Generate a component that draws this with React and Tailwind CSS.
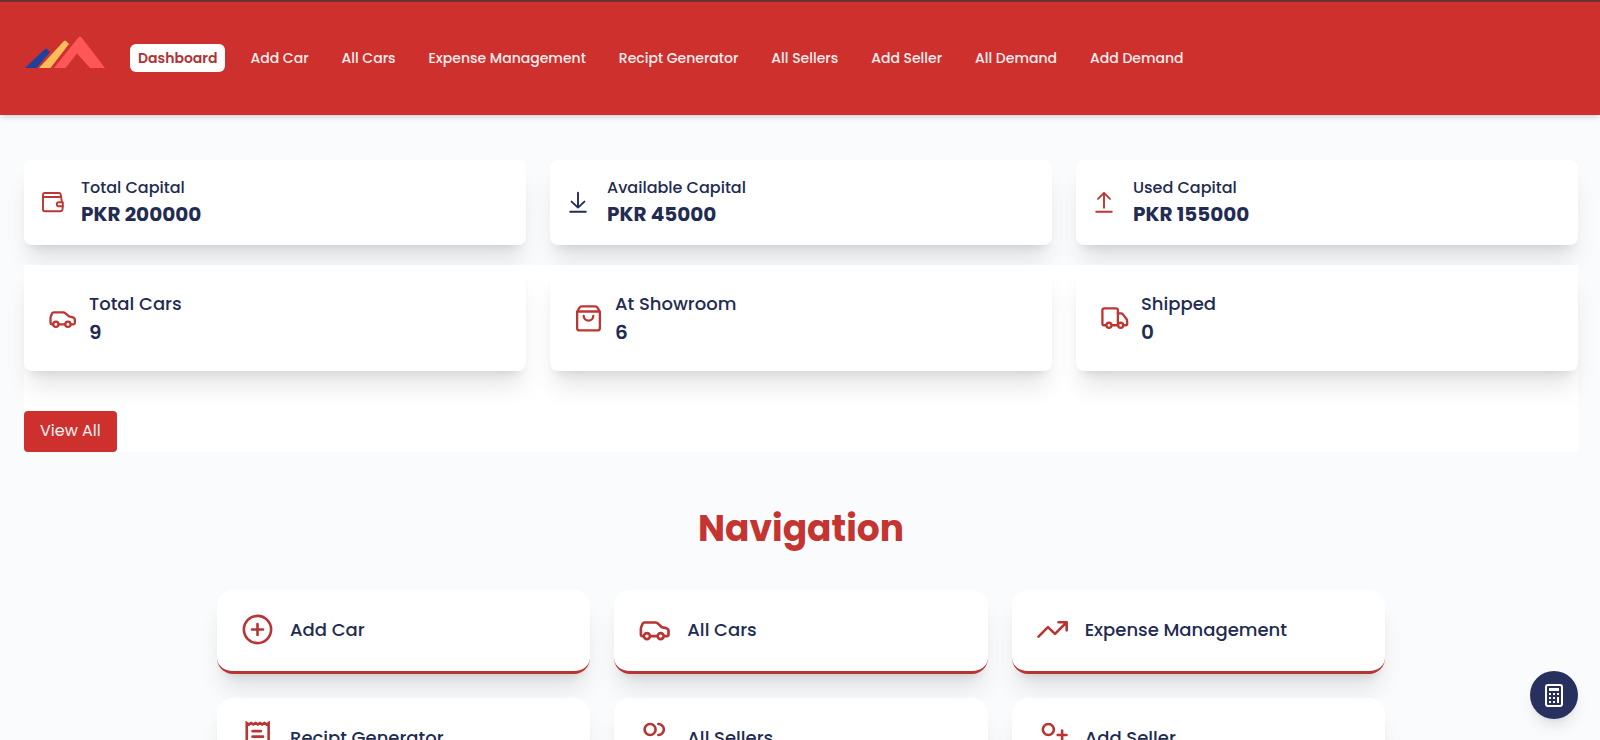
import React from "react";

const navLinks = [
  "Dashboard",
  "Add Car",
  "All Cars",
  "Expense Management",
  "Recipt Generator",
  "All Sellers",
  "Add Seller",
  "All Demand",
  "Add Demand",
];

function Icon({ children, className = "" }) {
  return (
    <svg
      viewBox="0 0 24 24"
      fill="none"
      stroke="currentColor"
      strokeWidth={1.9}
      strokeLinecap="round"
      strokeLinejoin="round"
      aria-hidden="true"
      className={`shrink-0 ${className}`}
    >
      {children}
    </svg>
  );
}

const walletPaths = (
  <>
    <path d="M21.8 12.2 21.2 7 20.6 4.2Q20.3 3 19.2 3H4.8Q3 3 3 4.8V19.6Q3 21.2 4.6 21.2H20.6Q22.2 21.2 22.5 19.5L22.8 16.2" />
    <path d="M3 7h18.2M22.8 12.2h-4a2 2 0 0 0 0 4h4z" />
  </>
);
const downPaths = <path d="M12 2.8v14.7M5.6 11.6l6.4 6 6.4-6M4.2 21.7h15.6" />;
const upPaths = <path d="M12 17.8V2.9M6 8.8l6-6 6 6M4.2 21.7h15.6" />;
const carPaths = (
  <>
    <path d="M4.2 16.8H3.2A1.1 1.1 0 0 1 2.1 15.7V11.6Q2.1 11 2.3 10.4L3.3 7.9Q3.7 6.9 4.8 6.9H12.6Q13.5 6.9 14.2 7.5L17.4 10.3 20.6 11Q22.2 11.5 22.2 13.2V15.7A1.1 1.1 0 0 1 21.1 16.8H18.9M8.8 16.8h5.4" />
    <circle cx="6.5" cy="16.8" r="2.2" />
    <circle cx="16.5" cy="16.8" r="2.2" />
  </>
);
const bagPaths = (
  <>
    <path d="M2.6 6.2V20Q2.6 21.9 4.5 21.9H19.5Q21.4 21.9 21.4 20V6.2L19.4 3Q18.8 2 17.6 2H6.4Q5.2 2 4.6 3zM2.6 6.2H21.4" />
    <path d="M8 9.8a4 4 0 0 0 8 0" />
  </>
);
const truckPaths = (
  <>
    <path d="M5.1 17.6H3.2Q2 17.6 2 16.4V5.2Q2 3.6 3.6 3.6H13.2Q14.8 3.6 14.8 5.2V17.6H9.7" />
    <path d="M14.8 7.8H17.4Q18.4 7.8 19 8.6L21.8 12.2Q22.5 13.1 22.5 14.2V16.4Q22.5 17.6 21.3 17.6H19.4" />
    <circle cx="7.4" cy="17.6" r="2.1" />
    <circle cx="17.1" cy="17.6" r="2.1" />
  </>
);
const plusCirclePaths = (
  <>
    <circle cx="12" cy="12" r="9.9" />
    <path d="M12 8v8M8 12h8" />
  </>
);
const trendPaths = <path d="M1.8 17.2 8.7 10.3 13.8 15.2 22.3 6.7M16.4 6.7h5.9v5.9" />;
const receiptPaths = (
  <>
    <path
      strokeLinejoin="miter"
      d="M4.2 1.5v21l1.6-1 1.6 1 1.6-1 1.6 1 1.6-1 1.6 1 1.6-1 1.6 1 1.600-1 1.500 1V1.500l-1.500 1-1.600-1-1.600 1-1.600-1-1.600 1-1.600-1-1.600 1-1.600-1-1.600 1z"
    />
    <path d="M8.400 7.400h6M8.400 11.400h7.600M8.400 15.400h7.600" />
  </>
);
const sellersPaths = (
  <>
    <circle cx="8.8" cy="6.2" r="4" />
    <path d="M14.8 2.2a4 4 0 0 1 0 8M1.8 21v-2a4 4 0 0 1 4-4h6a4 4 0 0 1 4 4v2M18.5 15.3a4 4 0 0 1 3 3.7v2" />
  </>
);
const addSellerPaths = (
  <>
    <circle cx="9" cy="6.2" r="4" />
    <path d="M19 7v6.4M15.8 10.2h6.4M2 21v-2a4 4 0 0 1 4-4h6a4 4 0 0 1 4 4v2" />
  </>
);

const capital = [
  { label: "Total Capital", value: "PKR 200000", icon: walletPaths, color: "text-[#bd3632]" },
  { label: "Available Capital", value: "PKR 45000", icon: downPaths, color: "text-[#232d59]" },
  { label: "Used Capital", value: "PKR 155000", icon: upPaths, color: "text-[#bd3632]" },
];

const cars = [
  { label: "Total Cars", value: "9", icon: carPaths },
  { label: "At Showroom", value: "6", icon: bagPaths },
  { label: "Shipped", value: "0", icon: truckPaths },
];

const shortcuts = [
  { label: "Add Car", icon: plusCirclePaths },
  { label: "All Cars", icon: carPaths },
  { label: "Expense Management", icon: trendPaths },
  { label: "Recipt Generator", icon: receiptPaths },
  { label: "All Sellers", icon: sellersPaths },
  { label: "Add Seller", icon: addSellerPaths },
];

function Logo() {
  return (
    <svg viewBox="0 0 82 34" className="h-[34px] w-[82px]" role="img" aria-label="Logo">
      <path d="M1 33 20 15Q22 12 24 15L26 17 12.5 33z" fill="#1d429b" />
      <path d="M15 33 39 7Q41 4 43 7L45 9 26.5 33z" fill="#ffbd59" />
      <path d="M30 33 54 3Q56 0 58 3L81 33H66L53 18.5 41.5 33z" fill="#ff5757" />
    </svg>
  );
}

export default function App() {
  return (
    <div className="h-screen overflow-x-hidden overflow-y-auto bg-[#f9fbfd] font-['Poppins','Inter',sans-serif] text-[#222b52] [scrollbar-width:none]">
      <header className="flex h-[115px] items-center gap-6 border-t-2 border-[#6d3032] bg-[#ce302d] px-6 pb-0.5 shadow-md">
        <a href="#home" className="-mt-3">
          <Logo />
        </a>
        <nav className="flex items-center gap-[17px] text-sm font-medium whitespace-nowrap">
          {navLinks.map((link) => (
            <a
              key={link}
              href="#"
              className={
                link === "Dashboard"
                  ? "rounded-md bg-white px-2 py-1 font-semibold text-[#b03234]"
                  : "rounded-md px-2 py-1 text-[#fdeeee]"
              }
            >
              {link}
            </a>
          ))}
        </nav>
      </header>

      <main className="pt-[45px] pr-[22px] pb-12 pl-6">
        <section className="grid grid-cols-3 gap-6">
          {capital.map((item) => (
            <div key={item.label} className="flex items-center gap-[17px] rounded-lg bg-white px-4 pt-[15px] pb-[17px] shadow-xl">
              <Icon className={`size-6 ${item.color}`}>{item.icon}</Icon>
              <div>
                <h3 className="text-base leading-[25px] font-medium">{item.label}</h3>
                <p className="text-xl leading-7 font-bold">{item.value}</p>
              </div>
            </div>
          ))}
        </section>

        <section className="relative mt-5 bg-white">
          <div className="grid grid-cols-3 gap-6">
            {cars.map((item) => (
              <div key={item.label} className="flex items-center gap-3 rounded-lg bg-white p-6 shadow-xl">
                <Icon className="size-[29px] text-[#bd3632]">{item.icon}</Icon>
                <div>
                  <h3 className="text-lg leading-[29px] font-medium">{item.label}</h3>
                  <p className="text-xl leading-[29px] font-semibold">{item.value}</p>
                </div>
              </div>
            ))}
          </div>
          <button type="button" className="mt-10 block rounded bg-[#ce302d] px-4 pt-[7px] pb-[9px] text-base leading-[25px] text-[#fdf3f3]">
            View All
          </button>
        </section>

        <section className="mx-auto mt-[57px] max-w-[1168px]">
          <h2 className="text-center text-4xl leading-10 font-bold text-[#c43431]">Navigation</h2>
          <div className="mt-[41px] grid grid-cols-3 gap-6">
            {shortcuts.map((item) => (
              <a
                key={item.label}
                href="#"
                className="flex items-center gap-4 rounded-2xl border-b-3 border-[#b83534] bg-white px-6 pt-[23px] pb-[25px] shadow-xl"
              >
                <Icon className="size-[33px] text-[#b83534]">{item.icon}</Icon>
                <span className="text-lg leading-7 font-medium">{item.label}</span>
              </a>
            ))}
          </div>
        </section>
      </main>

      <button
        type="button"
        aria-label="Calculator"
        className="fixed right-[22px] bottom-[21px] flex size-12 items-center justify-center rounded-full bg-[#27305f] text-white shadow-lg"
      >
        <svg viewBox="0 0 18 23" className="h-[23px] w-[18px]" fill="none" stroke="currentColor" aria-hidden="true">
          <rect x="1" y="1" width="16" height="21" rx="2" strokeWidth="2" />
          <rect x="4" y="4" width="10" height="3" fill="currentColor" stroke="none" />
          <g strokeWidth="2">
            <path d="M4 10h2M8 10h2M12 10h2M4 14h2M8 14h2M4 18h2M8 18h2" />
            <path d="M13 13v6" />
          </g>
        </svg>
      </button>
    </div>
  );
}
